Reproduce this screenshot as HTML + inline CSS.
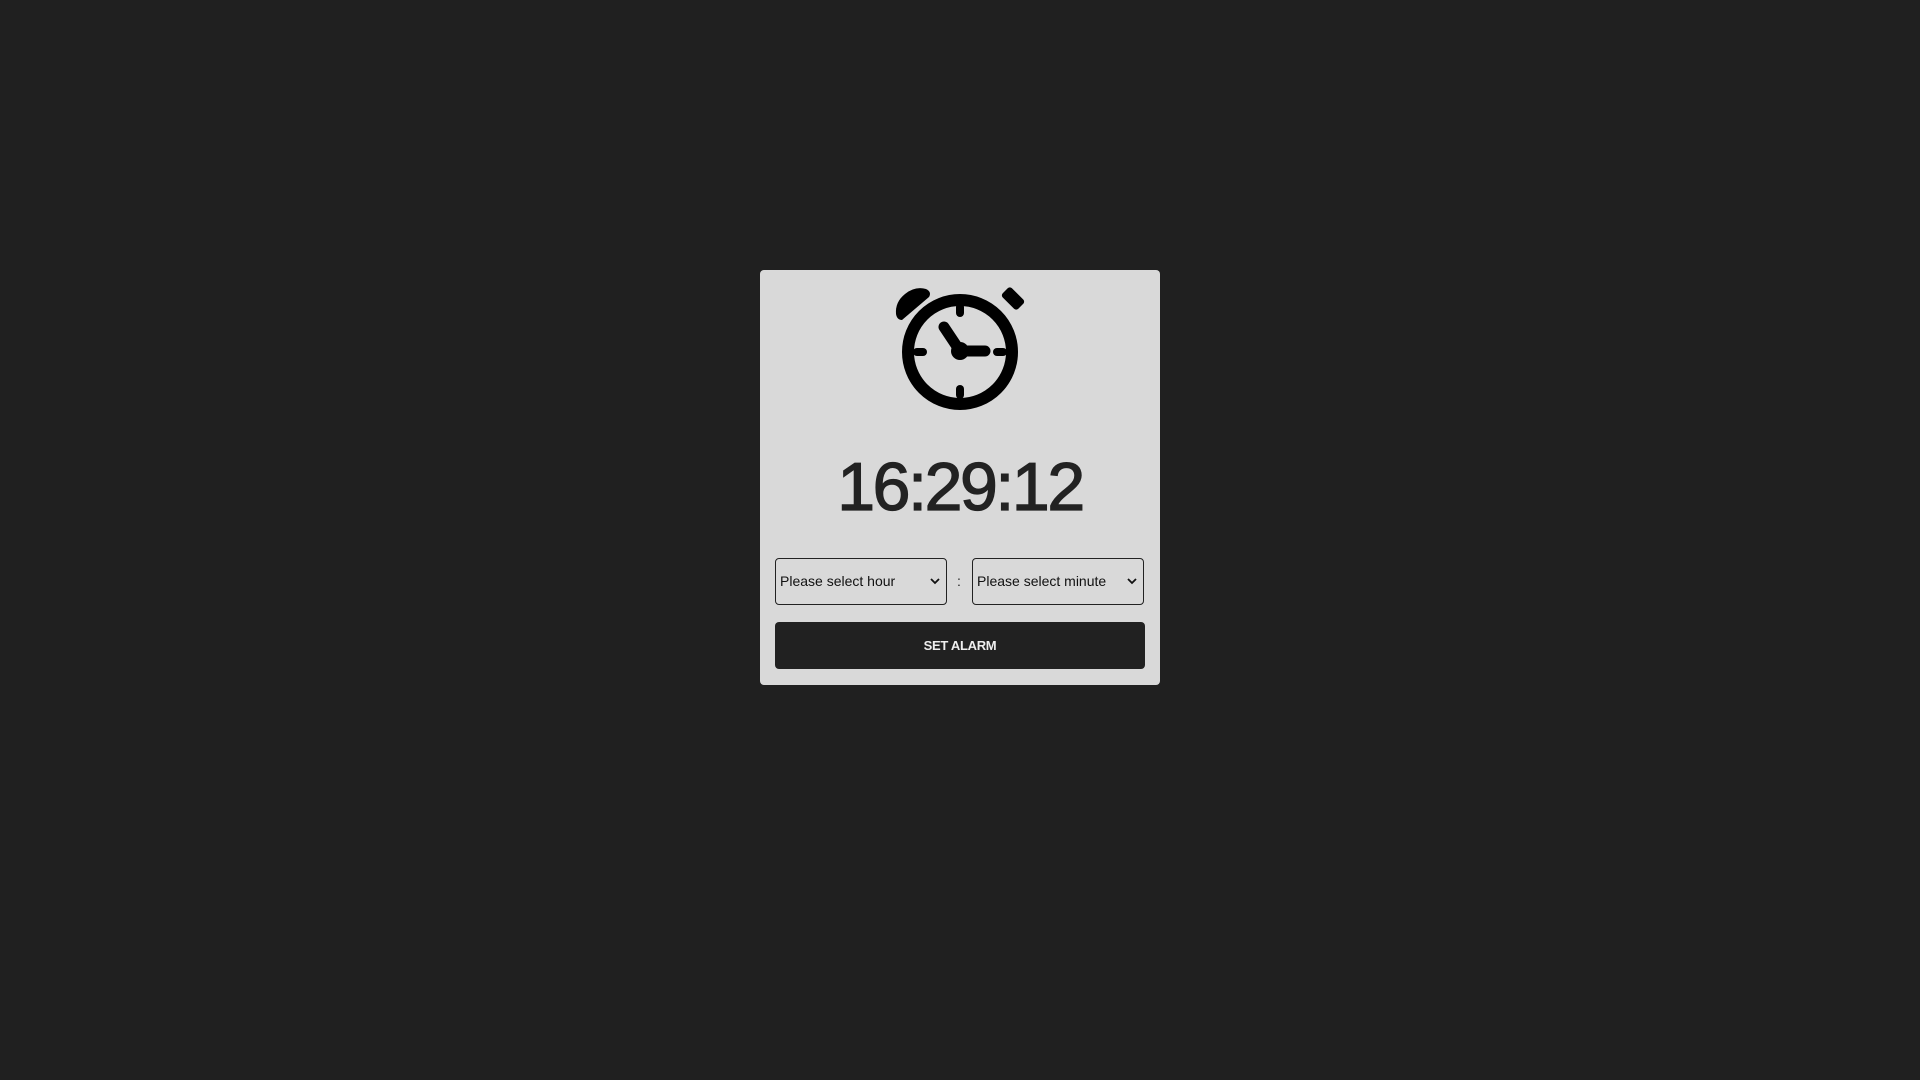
<!DOCTYPE html>
<html><head><meta charset="utf-8"><style>
html,body{margin:0;padding:0;background:#202020;width:1920px;height:1080px;overflow:hidden;font-family:"Liberation Sans",Roboto,sans-serif}
.card{position:absolute;left:760px;top:270px;width:400px;height:415px;background:#d9d9d9;border-radius:4px}
.time{position:absolute;width:400px;top:447px;text-align:center;font-size:68px;color:#222;line-height:80px;letter-spacing:-2.4px;-webkit-text-stroke:1.3px #222}
.sel{position:absolute;top:558px;width:172px;height:47px;box-sizing:border-box;border:1px solid #222;border-radius:4px;background:#d9d9d9;font-size:14px;color:#111;line-height:45px;padding-left:4px}
.sel svg{position:absolute;right:6px;top:19px}
.colon{position:absolute;left:957px;top:558px;line-height:47px;font-size:14px;color:#222}
.btn{position:absolute;left:775px;top:622px;width:370px;height:47px;background:#212121;border-radius:4px;color:#eee;font-weight:bold;font-size:13px;text-align:center;line-height:47px;letter-spacing:-0.3px}
</style></head><body>
<div class="card"></div>
<svg style="position:absolute;left:0;top:0" width="1920" height="1080">
<circle cx="960" cy="352" r="52" fill="none" stroke="#000" stroke-width="12"/>
<g stroke="#000" stroke-width="8" stroke-linecap="round">
<line x1="960" y1="307" x2="960" y2="313"/><line x1="960" y1="389" x2="960" y2="395"/>
<line x1="917" y1="352" x2="923" y2="352"/><line x1="997" y1="352" x2="1003" y2="352"/>
</g>
<g stroke="#000" stroke-width="11" stroke-linecap="round" fill="none">
<polyline points="944,327 960,351 985,351"/>
</g>
<circle cx="960" cy="351" r="9" fill="#000"/>
<path d="M896,314 Q895,302 905,294 Q915,286 926,289 Q932,292 929,297 L902,320 Q897,320 896,314Z" fill="#000"/>
<rect x="1002" y="292" width="22" height="13" rx="3" transform="rotate(45 1013 298.5)" fill="#000"/>
</svg>
<div class="time" style="left:760px">16:29:12</div>
<div class="sel" style="left:775px">Please select hour<svg width="10" height="7"><path d="M1,1 L5,5 L9,1" stroke="#111" stroke-width="1.8" fill="none"/></svg></div>
<div class="colon">:</div>
<div class="sel" style="left:972px">Please select minute<svg width="10" height="7"><path d="M1,1 L5,5 L9,1" stroke="#111" stroke-width="1.8" fill="none"/></svg></div>
<div class="btn">SET ALARM</div>
</body></html>
